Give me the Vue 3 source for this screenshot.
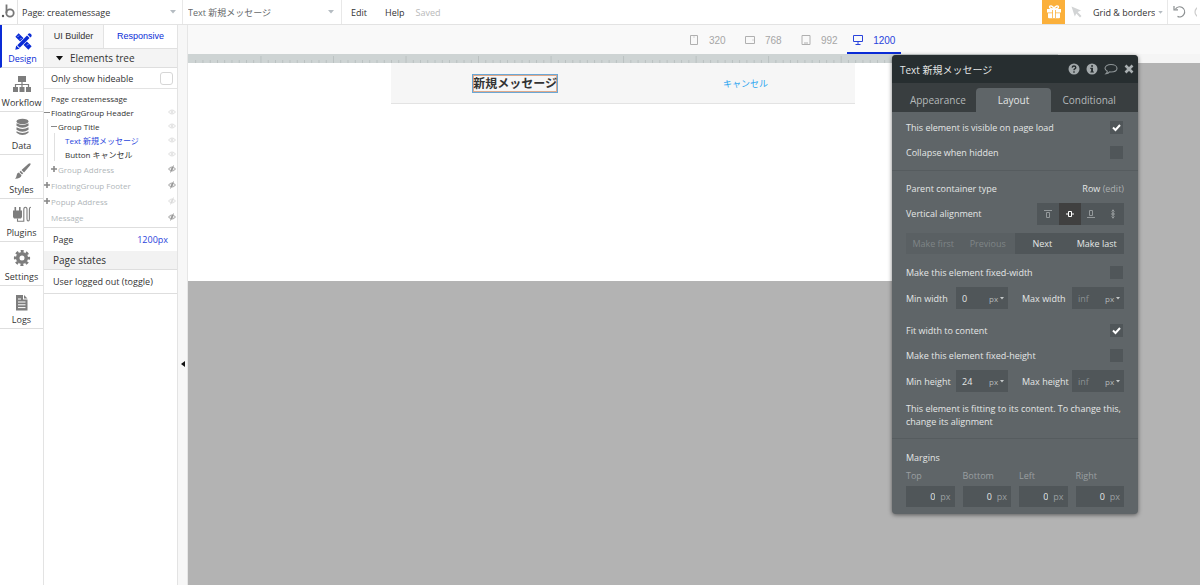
<template>
  <div class="editor">
    <header class="topbar">
      <a class="logo" href="#" aria-label="Home">
        <svg width="14" height="16" viewBox="0 0 14 16">
          <circle cx="2" cy="12" r="1.2" fill="#555" />
          <path d="M5.5 0.500V9" fill="none" stroke="#777" stroke-width="1.8" />
          <circle cx="9" cy="9" r="3.700" fill="none" stroke="#777" stroke-width="1.8" />
        </svg>
      </a>
      <label class="picker page-picker">
        <select aria-label="Page">
          <option>Page: createmessage</option>
        </select>
        <svg class="caret" width="6" height="4" viewBox="0 0 6 4"><path d="M0 0h6L3 3.5z" /></svg>
      </label>
      <label class="picker element-picker">
        <select aria-label="Element">
          <option>Text 新規メッセージ</option>
        </select>
        <svg class="caret" width="6" height="4" viewBox="0 0 6 4"><path d="M0 0h6L3 3.5z" /></svg>
      </label>
      <nav class="menu">
        <button>Edit</button>
        <button>Help</button>
        <span class="saved">Saved</span>
      </nav>
      <div class="tools">
        <button class="gift" aria-label="Gift">
          <svg width="16" height="16" viewBox="0 0 16 16">
            <path d="M1 5h14v3.4H1zM2 9.2h5v5H3q-1 0-1-1zM9 9.2h5v4q0 1-1 1H9z" fill="#fff" />
            <path d="M8 5C5 5 3.6 4.300 3.600 3S6.600 0.800 8 5C9.400 0.800 12.400 1.700 12.400 3S11 5 8 5z" fill="none" stroke="#fff" stroke-width="1.4" />
            <path d="M6.900 5h2.200v9.200H6.900z" fill="#fff" />
            <path d="M6.500 6v8.200M9.500 6v8.200" stroke="#fbb03b" stroke-width="0.800" />
          </svg>
        </button>
        <button class="pointer" aria-label="Pointer">
          <svg width="11" height="12" viewBox="0 0 11 12">
            <path d="M0.500 0.500L10 4.500L6.600 6L10.500 10L9 11.500L5.300 7.400L3.800 10.500z" fill="#d2d4d5" />
          </svg>
        </button>
        <label class="picker grid-picker">
          <select aria-label="Grid">
            <option>Grid &amp; borders</option>
          </select>
          <svg class="caret" width="5" height="3" viewBox="0 0 6 4"><path d="M0 0h6L3 3.5z" /></svg>
        </label>
        <button class="undo" aria-label="Undo">
          <svg width="26" height="14" viewBox="0 0 26 14">
            <path d="M4.500 4A5 5 0 1 1 6.500 11.400" fill="none" stroke="#8b8f91" stroke-width="1.200" />
            <path d="M3 1v3.800h4" fill="none" stroke="#8b8f91" stroke-width="1.200" />
            <circle cx="29" cy="7" r="5" fill="none" stroke="#ccc" stroke-width="1.200" />
          </svg>
        </button>
      </div>
    </header>

    <div class="workspace">
      <nav class="rail">
        <button
          v-for="item in sections"
          :key="item.name"
          :class="{ active: section === item.name }"
          @click="section = item.name"
        >
          <svg width="20" height="20" viewBox="0 0 20 20" v-html="item.icon"></svg>
          <span>{{ item.name }}</span>
        </button>
      </nav>

      <aside class="sidebar">
        <div class="side-tabs">
          <button>UI Builder</button>
          <button class="active">Responsive</button>
        </div>
        <button class="tree-title">
          <svg width="7" height="5" viewBox="0 0 7 5"><path d="M0 0h7L3.500 4.500z" fill="#111" /></svg>
          Elements tree
        </button>
        <label class="hideable">
          Only show hideable
          <input v-model="onlyHideable" type="checkbox" />
        </label>
        <ul class="tree">
          <li v-for="node in tree" :key="node.label" :class="{ dim: node.dim, selected: node.selected }">
            <span v-for="n in node.depth" :key="n" class="guide"></span>
            <span class="marker">
              <svg v-if="node.marker" width="6" height="6" viewBox="0 0 6 6">
                <path :d="node.marker === '+' ? 'M0 3h6M3 0v6' : 'M0 3.5h6'" :stroke-width="node.marker === '+' ? 1.6 : 1" />
              </svg>
            </span>
            <span class="label">{{ node.label }}</span>
            <svg v-if="node.eye" :class="['eye', node.eye]" width="8" height="8" viewBox="0 0 8 8">
              <path d="M0.500 4Q4 0 7.500 4Q4 8 0.500 4z" />
              <circle cx="4" cy="4" r="1" />
              <path v-if="node.dim" d="M2.500 7.500L5.500 0.500" />
            </svg>
          </li>
        </ul>
        <div class="page-width">
          <span>Page</span>
          <a href="#">1200px</a>
        </div>
        <h2 class="states-title">Page states</h2>
        <button class="state">User logged out (toggle)</button>
      </aside>

      <div class="gutter">
        <button aria-label="Collapse">
          <svg width="4" height="6" viewBox="0 0 4 6"><path d="M4 0v6L0 3z" fill="#111" /></svg>
        </button>
      </div>

      <main class="canvas">
        <div class="viewports">
          <button
            v-for="view in viewports"
            :key="view.width"
            :class="{ active: viewport === view.width }"
            @click="viewport = view.width"
          >
            <svg width="12" height="12" viewBox="0 0 12 12"><path :d="view.icon" /></svg>
            {{ view.width }}
          </button>
        </div>
        <div class="ruler-row">
          <svg class="ruler" viewBox="0 0 1200 9" preserveAspectRatio="none">
            <rect
              v-for="n in 119"
              :key="n"
              :x="n * 10"
              :y="n % 10 ? 6 : 2"
              width="1.200"
              :height="n % 10 ? 3 : 7"
            />
          </svg>
        </div>
        <div class="artboard">
          <div class="page-header">
            <strong class="page-title">新規メッセージ</strong>
            <a class="cancel" href="#">キャンセル</a>
          </div>
        </div>
      </main>
    </div>

    <section class="props">
      <header class="props-head">
        <h1>Text 新規メッセージ</h1>
        <button aria-label="Help">
          <svg width="12" height="12" viewBox="0 0 12 12">
            <circle cx="6" cy="6" r="5.500" fill="#a3a9ab" />
            <path d="M4.200 4.600Q4.300 3 6 3T7.800 4.500Q7.800 5.400 6.800 5.900Q6 6.300 6 7.200M6 8.200v1.500" fill="none" stroke="#272e30" stroke-width="1.400" />
          </svg>
        </button>
        <button aria-label="Info">
          <svg width="12" height="12" viewBox="0 0 12 12">
            <circle cx="6" cy="6" r="5.500" fill="#a3a9ab" />
            <path d="M5.100 2.200h1.900v1.600H5.100zM4.300 4.800H7v3.600h0.900v1.200H4.300V8.400h0.800V6H4.300z" fill="#272e30" />
          </svg>
        </button>
        <button aria-label="Comment">
          <svg width="14" height="12" viewBox="0 0 14 12">
            <path d="M7 1.500C10.500 1.500 13 3.200 13 5.300S10.500 9 7 9Q6.300 9 5.600 8.900Q4.300 10.500 2 10.700Q3.300 9.500 3.300 8.200Q1 7 1 5.300C1 3.200 3.500 1.500 7 1.500z" fill="none" stroke="#8d9496" stroke-width="1.100" />
          </svg>
        </button>
        <button aria-label="Close">
          <svg width="10" height="10" viewBox="0 0 10 10"><path d="M1.500 1.500l7 7M8.500 1.500l-7 7" stroke="#a9afb1" stroke-width="2.600" /></svg>
        </button>
      </header>
      <div class="props-tabs">
        <button v-for="name in tabs" :key="name" :class="{ active: tab === name }" @click="tab = name">{{ name }}</button>
      </div>

      <div class="group first">
        <label class="row">This element is visible on page load<input v-model="visible" class="check" type="checkbox" /></label>
        <label class="row">Collapse when hidden<input v-model="collapse" class="check" type="checkbox" /></label>
      </div>

      <div class="group second">
        <div class="row">
          <span>Parent container type</span>
          <span>Row <a href="#">(edit)</a></span>
        </div>
        <div class="row">
          <span>Vertical alignment</span>
          <div class="aligns">
            <button
              v-for="item in aligns"
              :key="item.name"
              :class="{ active: align === item.name }"
              :aria-label="item.name"
              @click="align = item.name"
            >
              <svg width="10" height="10" viewBox="0 0 10 10"><path :d="item.icon" /></svg>
            </button>
          </div>
        </div>
        <div class="order">
          <button disabled>Make first</button>
          <button disabled>Previous</button>
          <button>Next</button>
          <button>Make last</button>
        </div>
        <label class="row gap-top">Make this element fixed-width<input v-model="fixedWidth" class="check" type="checkbox" /></label>
        <div class="sizes">
          <template v-for="size in widths" :key="size.id">
            <label :for="size.id">{{ size.label }}</label>
            <div class="size-box">
              <input :id="size.id" v-model="size.value" type="text" placeholder="inf" />
              <select :aria-label="size.label + ' unit'"><option>px</option></select>
              <svg width="4" height="3" viewBox="0 0 4 3"><path d="M0 0h4L2 2.500z" /></svg>
            </div>
          </template>
        </div>
        <label class="row wide">Fit width to content<input v-model="fitWidth" class="check" type="checkbox" /></label>
        <label class="row">Make this element fixed-height<input v-model="fixedHeight" class="check" type="checkbox" /></label>
        <div class="sizes">
          <template v-for="size in heights" :key="size.id">
            <label :for="size.id">{{ size.label }}</label>
            <div class="size-box">
              <input :id="size.id" v-model="size.value" type="text" placeholder="inf" />
              <select :aria-label="size.label + ' unit'"><option>px</option></select>
              <svg width="4" height="3" viewBox="0 0 4 3"><path d="M0 0h4L2 2.500z" /></svg>
            </div>
          </template>
        </div>
        <p class="hint">This element is fitting to its content. To change this, change its alignment</p>
      </div>

      <div class="group third">
        <h3>Margins</h3>
        <div class="margins">
          <label v-for="side in margins" :key="side.name">
            {{ side.name }}
            <span class="margin-box"><input v-model="side.value" type="text" />px</span>
          </label>
        </div>
      </div>
    </section>
  </div>
</template>

<script setup>
import { ref } from 'vue'

const section = ref('Design')
const sections = [
  {
    name: 'Design',
    icon: '<path d="M4 5l13 13" stroke="currentColor" stroke-width="4.600"/><path d="M16.500 5.500L5 17" stroke="#fff" stroke-width="4.600"/><path d="M15.300 6.700L5.500 16.500" stroke="currentColor" stroke-width="3.600"/><path d="M2.300 19.700l0.900-4.300L6.600 18.800zM14.600 4.600L17.400 7.400L18.600 6.200Q19 5.200 17.900 4.100T15.800 3.400z" fill="currentColor"/><path d="M6 5.500l-1.500 1.500M8.500 8l-1.500 1.500M14 15.500l1.500-1.500" stroke="#fff" stroke-width="0.600"/>'
  },
  {
    name: 'Workflow',
    icon: '<path d="M6 2h8v6H6zM1 13h5v5H1zM7.500 13h5v5h-5zM14 13h5v5h-5z" fill="currentColor"/><path d="M10 8v5M3.500 13v-2.500h13V13" fill="none" stroke="currentColor" stroke-width="1.200"/>'
  },
  {
    name: 'Data',
    icon: '<ellipse cx="10.500" cy="4.500" rx="6" ry="2.700" fill="currentColor"/><path d="M4.500 6.300q6 3.400 12 0v2.500q-6 4-12 0zM4.500 10.300q6 3.600 12 0v2.500q-6 4-12 0zM4.500 14.300q6 3.600 12 0v1.500q-6 4.500-12 0z" fill="currentColor"/>'
  },
  {
    name: 'Styles',
    icon: '<path d="M18.500 2.500Q19 3 18 4.500L12 11.500L9.500 9L16.500 2.800Q18 1.800 18.500 2.500zM8.700 9.800L11.200 12.300L10 13.500L7.500 11zM6.800 11.500L9.500 14.200Q9 17.500 3 17.800Q4.500 16.500 4.600 14.500Q4.700 12 6.800 11.500z" fill="currentColor"/>'
  },
  {
    name: 'Plugins',
    icon: '<path d="M1 6.500H10V13L9 14.500H2L1 13zM2.500 3h1.600v3.500H2.500zM7 3h1.600v3.500H7z" fill="currentColor"/><path d="M5.500 14.500v2.700h6.300V5.500q0-2.200 1.600-2.200T15 5.500V15q0 2 1.200 2t1.200-2V5q0-1.800 1.600-1.800" fill="none" stroke="currentColor" stroke-width="1.100"/>'
  },
  {
    name: 'Settings',
    icon: '<circle cx="10" cy="10" r="4.300" fill="none" stroke="currentColor" stroke-width="3.600"/><circle cx="10" cy="10" r="6.800" fill="none" stroke="currentColor" stroke-width="2.600" stroke-dasharray="2.900 2.440" stroke-dashoffset="1.450"/>'
  },
  {
    name: 'Logs',
    icon: '<path d="M4 4h7v4.500h4.500V19.500H4zM12 4L15.500 7.500H12z" fill="currentColor"/><path d="M6 11h7.500M6 13.800h7.500M6 16.600h7.500M6 8h3" stroke="#fff" stroke-width="1"/>'
  }
]

const onlyHideable = ref(false)
const tree = [
  { label: 'Page createmessage', depth: 0 },
  { label: 'FloatingGroup Header', depth: 0, marker: '-', eye: 'faint' },
  { label: 'Group Title', depth: 1, marker: '-', eye: 'faint' },
  { label: 'Text 新規メッセージ', depth: 2, selected: true, eye: 'faint' },
  { label: 'Button キャンセル', depth: 2, eye: 'faint' },
  { label: 'Group Address', depth: 1, marker: '+', dim: true, eye: 'strong' },
  { label: 'FloatingGroup Footer', depth: 0, marker: '+', dim: true, eye: 'strong' },
  { label: 'Popup Address', depth: 0, marker: '+', dim: true, eye: 'faint' },
  { label: 'Message', depth: 0, dim: true, eye: 'strong' }
]

const viewport = ref(1200)
const viewports = [
  { width: 320, icon: 'M2.500 1.500h7v9h-7zM5.500 3h1' },
  { width: 768, icon: 'M1.500 2.500h9v7h-9zM9 5.500v1' },
  { width: 992, icon: 'M2 1.500h8v9H2zM4 9h4' },
  { width: 1200, icon: 'M1.500 1.500h9v6h-9zM6 7.500v3M3.500 10.500h5' }
]

const tabs = ['Appearance', 'Layout', 'Conditional']
const tab = ref('Layout')

const visible = ref(true)
const collapse = ref(false)
const fixedWidth = ref(false)
const fitWidth = ref(true)
const fixedHeight = ref(false)

const align = ref('Center')
const aligns = [
  { name: 'Top', icon: 'M1 1.500h8M3.500 3.500h3v5h-3z' },
  { name: 'Center', icon: 'M1 5h2.500M6.500 5H9M3.500 2.500h3v5h-3z' },
  { name: 'Bottom', icon: 'M1 8.500h8M3.500 1.500h3v5h-3z' },
  { name: 'Stretch', icon: 'M5 0.500v9M3.500 2.500L5 1l1.500 1.500M3.500 7.500L5 9l1.500-1.500M4 4h2v2H4z' }
]

const widths = ref([
  { id: 'min-width', label: 'Min width', value: '0' },
  { id: 'max-width', label: 'Max width', value: '' }
])
const heights = ref([
  { id: 'min-height', label: 'Min height', value: '24' },
  { id: 'max-height', label: 'Max height', value: '' }
])
const margins = ref([
  { name: 'Top', value: '0' },
  { name: 'Bottom', value: '0' },
  { name: 'Left', value: '0' },
  { name: 'Right', value: '0' }
])
</script>

<style>
body {
  margin: 0;
  background: #b3b3b3;
}
</style>

<style scoped>
.editor {
  position: relative;
  display: flex;
  flex-direction: column;
  min-height: 100vh;
  overflow: hidden;
  font-family: "Open Sans", "Noto Sans CJK JP", sans-serif;
  font-size: 9px;
  color: #333;
}

.editor * {
  box-sizing: border-box;
}

button,
input,
select {
  margin: 0;
  padding: 0;
  border: none;
  border-radius: 0;
  background: none;
  color: inherit;
  font: inherit;
  appearance: none;
  outline: none;
}

button {
  display: flex;
  align-items: center;
  justify-content: center;
  cursor: pointer;
}

a {
  text-decoration: none;
}

svg {
  flex: none;
}

/* top bar */
.topbar {
  display: flex;
  height: 25px;
  background: #fff;
  border-bottom: 1px solid #e3e3e3;
}

.logo {
  display: flex;
  align-items: center;
  width: 18px;
  padding-left: 1px;
  border-right: 1px solid #e3e3e3;
}

.picker {
  display: flex;
  align-items: center;
  border-right: 1px solid #e8e8e8;
}

.picker select {
  flex: 1;
  min-width: 0;
}

.caret {
  fill: #b5bcc2;
}

.page-picker {
  width: 165px;
  padding: 0 6px 0 4px;
}

.element-picker {
  width: 159px;
  padding: 0 7px 0 5px;
  color: #66696b;
}

.menu {
  display: flex;
  align-items: center;
  gap: 18px;
  padding-left: 9px;
}

.saved {
  margin-left: -7px;
  color: #b9b9b9;
}

.tools {
  display: flex;
  margin-left: auto;
}

.gift {
  width: 23px;
  background: #fbb03b;
}

.pointer {
  width: 23px;
}

.grid-picker {
  gap: 3px;
  width: 80px;
  padding: 0 4px 0 5px;
}

.undo {
  width: 32px;
}

/* section rail */
.workspace {
  display: flex;
  flex: 1;
}

.rail {
  display: grid;
  grid-template-rows: repeat(7, 1fr);
  flex: none;
  width: 43px;
  height: 304px;
}

.rail,
.sidebar {
  background: #fff;
}

.workspace > .rail {
  box-shadow: 0 300px 0 #fff;
}

.rail button {
  flex-direction: column;
  justify-content: flex-end;
  gap: 2px;
  padding-bottom: 2px;
  border-bottom: 1px solid #dedede;
}

.rail svg {
  color: #7d7d7d;
}

.rail .active {
  border-left: 2px solid #0a2bd6;
  color: #0a2bd6;
}

.rail .active svg {
  color: #0a2bd6;
}

/* sidebar */
.sidebar {
  flex: none;
  width: 135px;
  border-left: 1px solid #e3e3e3;
  border-right: 1px solid #e3e3e3;
}

.side-tabs {
  display: grid;
  grid-template-columns: 59px 1fr;
  height: 24px;
  border-bottom: 1px solid #e0e0e0;
  font-family: "Liberation Sans", sans-serif;
}

.side-tabs button {
  padding-bottom: 2px;
  background: #f7f7f7;
}

.side-tabs .active {
  border-left: 1px solid #e3e3e3;
  background: #fff;
  color: #0a2bd6;
}

.tree-title {
  justify-content: flex-start;
  gap: 7px;
  width: 100%;
  height: 19px;
  padding-left: 12px;
  border-bottom: 1px solid #dedede;
  background: #f4f4f4;
  font-size: 10px;
}

.hideable {
  display: flex;
  align-items: center;
  justify-content: space-between;
  height: 21px;
  padding: 0 4px 0 7px;
  border-bottom: 1px solid #e3e3e3;
}

.hideable input {
  width: 13px;
  height: 13px;
  border: 1px solid #d6d6d6;
  border-radius: 3px;
}

.tree {
  margin: 0;
  padding: 2px 1px 2px 0;
  border-bottom: 1px solid #dedede;
  list-style: none;
  font-size: 8px;
}

.tree li {
  display: flex;
  align-items: center;
  height: 14px;
}

.tree .dim {
  height: 16px;
  color: #b0b6b9;
}

.tree .selected {
  color: #2a44dc;
}

.guide {
  align-self: stretch;
  width: 7px;
  background: linear-gradient(#e0e0e0, #e0e0e0) 3px 0 / 1px 100% no-repeat;
}

.marker {
  display: flex;
  width: 7px;
}

.marker svg {
  stroke: #888;
}

.label {
  flex: 1;
  white-space: nowrap;
}

.eye {
  fill: none;
  stroke: #d5d5d5;
  stroke-width: 0.8;
}

.eye.strong {
  stroke: #888;
}

.page-width {
  display: flex;
  align-items: center;
  justify-content: space-between;
  height: 23px;
  padding: 0 9px;
}

.page-width a {
  color: #2a44dc;
}

.states-title {
  margin: 0;
  height: 19px;
  padding-left: 9px;
  border-bottom: 1px solid #dedede;
  background: #f2f2f2;
  font-size: 10px;
  font-weight: 400;
  line-height: 19px;
}

.state {
  justify-content: flex-start;
  width: 100%;
  height: 24px;
  padding-left: 9px;
  border-bottom: 1px solid #dedede;
}

.gutter {
  display: grid;
  grid-template-rows: 20fr auto 13fr;
  flex: none;
  width: 10px;
  border-right: 1px solid #e6e6e6;
  background: #f7f7f7;
}

.gutter button {
  grid-row: 2;
}

/* canvas */
.canvas {
  flex: 1;
  min-width: 0;
}

.viewports {
  display: flex;
  height: 29px;
  padding-left: 48.5%;
  background: #f9f9f9;
  font-family: "Liberation Sans", sans-serif;
  font-size: 10px;
  color: #a6a6a6;
}

.viewports button {
  gap: 9px;
  width: 56px;
  padding-top: 3px;
  border-bottom: 2px solid transparent;
}

.viewports svg {
  fill: none;
  stroke: #b0b0b0;
}

.viewports .active {
  width: 54px;
  border-bottom-color: #0a2bd6;
  color: #2a44dc;
}

.viewports .active svg {
  stroke: #2a44dc;
}

.ruler-row {
  height: 9px;
  background: #f5f5f5;
}

.ruler {
  display: block;
  width: 86%;
  height: 9px;
  background: #ced4d4;
  fill: #b8bfbf;
}

.artboard {
  width: 86%;
  height: 218px;
  background: #fff;
}

.page-header {
  display: flex;
  align-items: center;
  justify-content: space-between;
  width: 53.3%;
  height: 41px;
  margin: 0 auto;
  padding: 0 87px 0 82px;
  border-bottom: 1px solid #e3e3e3;
  background: #f6f6f6;
}

.page-title {
  outline: 1px solid #6ba8d6;
  box-shadow: inset 0 0 0 1px #e0a98a;
  font-size: 12px;
  line-height: 17px;
}

.cancel {
  color: #2ba5f0;
}

/* property window */
.props {
  position: absolute;
  top: 55px;
  right: 62px;
  width: 246px;
  border-radius: 4px;
  background: #5f6568;
  box-shadow: 0 1px 4px rgba(0, 0, 0, 0.5);
  color: #e4e6e6;
  overflow: hidden;
}

.props-head {
  display: flex;
  align-items: center;
  gap: 6px;
  height: 28px;
  padding: 0 4px 0 8px;
  background: #272e30;
}

.props-head h1 {
  flex: 1;
  margin: 0;
  font-size: 10px;
  font-weight: 400;
}

.props-tabs {
  display: flex;
  height: 29px;
  padding: 5px 11px 0 8px;
  background: #393e40;
  font-size: 10px;
  color: #b5b9ba;
}

.props-tabs button {
  flex: 1;
  border-radius: 4px 4px 0 0;
}

.props-tabs .active {
  background: #5f6568;
  color: #e4e6e6;
}

.group {
  padding: 3px 14px 5px;
}

.group + .group {
  border-top: 1px solid #565c5f;
}

.row {
  display: flex;
  align-items: center;
  justify-content: space-between;
  height: 25px;
}

.row a {
  color: #abafb1;
}

.gap-top {
  margin-top: 6px;
}

.wide {
  margin-top: 9px;
}

.check {
  width: 13px;
  height: 13px;
  margin-right: 1px;
  background: #505659;
}

.check:checked {
  background: #505659 url("data:image/svg+xml,%3Csvg xmlns='http://www.w3.org/2000/svg' viewBox='0 0 13 13'%3E%3Cpath d='M3 6.500l2.500 2.500L10 4' fill='none' stroke='%23fff' stroke-width='2'/%3E%3C/svg%3E");
}

.second {
  padding: 5px 14px 10px;
}

.aligns {
  display: flex;
  width: 87px;
  height: 22px;
  background: #505659;
}

.aligns button {
  flex: 1;
}

.aligns svg {
  fill: none;
  stroke: #94999b;
}

.aligns .active {
  background: #404040;
}

.aligns .active svg {
  stroke: #fff;
}

.order {
  display: grid;
  grid-template-columns: repeat(4, 1fr);
  height: 21px;
  margin-top: 7px;
}

.order button {
  background: #505659;
}

.order button:disabled {
  background: #5a6063;
  color: #7f8587;
}

.sizes {
  display: grid;
  grid-template-columns: 50px 52px 1fr 52px;
  align-items: center;
  height: 22px;
  margin-top: 2px;
}

.sizes label:nth-of-type(2) {
  padding-left: 14px;
}

.size-box {
  display: flex;
  align-items: center;
  gap: 1px;
  width: 52px;
  height: 22px;
  padding: 0 4px 0 6px;
  background: #505659;
}

.size-box input {
  flex: 1;
  width: 0;
}

.size-box input::placeholder {
  color: #8b9193;
}

.size-box select {
  color: #b5b9ba;
  font-size: 8px;
}

.size-box svg {
  fill: #c5c9ca;
}

.hint {
  margin: 10px 0 0;
  line-height: 13px;
}

.third {
  padding: 11px 14px 7px;
}

.third h3 {
  margin: 0;
  font-size: 9px;
  font-weight: 400;
  line-height: 16px;
}

.margins {
  display: grid;
  grid-template-columns: repeat(4, 1fr);
  gap: 8px;
  margin-top: 4px;
  color: #9a9fa1;
}

.margins label {
  line-height: 12px;
}

.margin-box {
  display: flex;
  align-items: center;
  gap: 5px;
  height: 21px;
  margin-top: 4px;
  padding-right: 4px;
  background: #505659;
}

.margin-box input {
  flex: 1;
  width: 0;
  color: #e4e6e6;
  text-align: right;
}
</style>
